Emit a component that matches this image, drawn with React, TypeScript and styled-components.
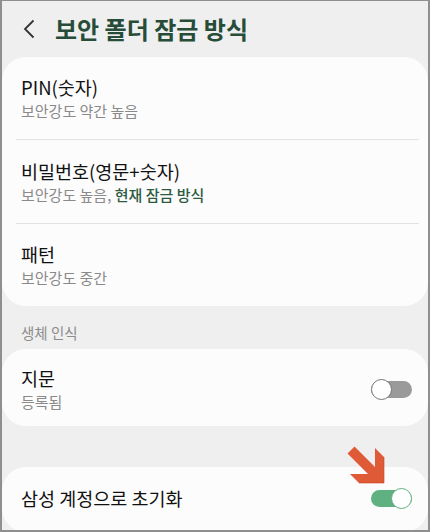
import styled, { createGlobalStyle } from 'styled-components';

const GlobalStyle = createGlobalStyle`
  html, body {
    margin: 0;
    padding: 0;
    background: #efefef;
  }
  body {
    font-family: "Noto Sans CJK KR", "Noto Sans", sans-serif;
    color: #111111;
  }
`;

const Frame = styled.div`
  position: relative;
  width: 430px;
  height: 532px;
  box-sizing: border-box;
  border: 2px solid #8f8f8f;
  border-top-width: 1px;
  background: #efefef;
  overflow: hidden;
`;

const Header = styled.header`
  height: 56px;
  display: flex;
  align-items: center;
  padding-left: 21px;
  gap: 20px;
`;

const Title = styled.h1`
  margin: 0;
  font-size: 24px;
  font-weight: 700;
  color: #274c38;
  line-height: 30px;
`;

const Card = styled.section<{ $gapTop?: number }>`
  background: #fcfcfc;
  border-radius: 24px;
  margin-top: ${(p) => p.$gapTop ?? 0}px;
`;

const Row = styled.div<{ $pad?: string }>`
  display: flex;
  align-items: center;
  justify-content: space-between;
  padding: ${(p) => p.$pad ?? '18px 16px 18px 19px'};
`;

const TextBlock = styled.div`
  display: flex;
  flex-direction: column;
`;

const ItemTitle = styled.div`
  font-size: 18.5px;
  line-height: 24px;
  color: #111111;
`;

const ItemSub = styled.div`
  font-size: 15px;
  line-height: 21px;
  color: #8a8a8a;
  margin-top: 1px;
`;

const Accent = styled.span`
  color: #2c5a42;
  font-weight: 500;
`;

const Divider = styled.hr`
  margin: 0 9px 0 14px;
  border: none;
  border-top: 1px solid #e2e2e2;
`;

const SectionLabel = styled.div`
  font-size: 14.5px;
  line-height: 20px;
  color: #8c8c8c;
  padding: 17px 19px 6px;
`;

const Switch = styled.span<{ $on?: boolean }>`
  display: inline-flex;
  align-items: center;
  justify-content: ${(p) => (p.$on ? 'flex-end' : 'flex-start')};
  width: 41px;
  height: 17px;
  border-radius: 9px;
  background: ${(p) => (p.$on ? '#5fb181' : '#9a9a9a')};
  flex-shrink: 0;
`;

const Knob = styled.span<{ $on?: boolean }>`
  width: 21px;
  height: 21px;
  box-sizing: border-box;
  border-radius: 50%;
  background: #ffffff;
  border: 1.5px solid ${(p) => (p.$on ? '#5fb181' : '#777777')};
`;

// annotation arrow drawn over the screenshot
const Arrow = styled.svg`
  position: absolute;
  left: 343px;
  top: 443px;
`;

const Toggle = ({ on }: { on?: boolean }) => (
  <Switch $on={on}>
    <Knob $on={on} />
  </Switch>
);

export default function App() {
  return (
    <>
      <GlobalStyle />
      <Frame>
        <Header>
          <svg width="12" height="20" viewBox="0 0 12 20">
            <path d="M10.5 1.5 L2 10 L10.5 18.5" fill="none" stroke="#333" strokeWidth="1.8" />
          </svg>
          <Title>보안 폴더 잠금 방식</Title>
        </Header>

        <Card>
          <Row>
            <TextBlock>
              <ItemTitle>PIN(숫자)</ItemTitle>
              <ItemSub>보안강도 약간 높음</ItemSub>
            </TextBlock>
          </Row>
          <Divider />
          <Row $pad="19px 16px 18px 19px">
            <TextBlock>
              <ItemTitle>비밀번호(영문+숫자)</ItemTitle>
              <ItemSub>
                보안강도 높음, <Accent>현재 잠금 방식</Accent>
              </ItemSub>
            </TextBlock>
          </Row>
          <Divider />
          <Row>
            <TextBlock>
              <ItemTitle>패턴</ItemTitle>
              <ItemSub>보안강도 중간</ItemSub>
            </TextBlock>
          </Row>
        </Card>

        <SectionLabel>생체 인식</SectionLabel>

        <Card>
          <Row $pad="17px 16px 14px 19px">
            <TextBlock>
              <ItemTitle>지문</ItemTitle>
              <ItemSub>등록됨</ItemSub>
            </TextBlock>
            <Toggle />
          </Row>
        </Card>

        <Card $gapTop={41}>
          <Row $pad="19px 16px 22px 19px">
            <ItemTitle>삼성 계정으로 초기화</ItemTitle>
            <Toggle on />
          </Row>
        </Card>

        <Arrow width="42" height="42" viewBox="0 0 42 42">
          <polygon
            points="9.5,2.5 30,23 30,4 39,13 39,39 14,39 5,30 23,30 2.5,9.5"
            fill="#df5a36"
          />
          <path d="M39 13 V39 H14" fill="none" stroke="#c4482a" strokeWidth="1" opacity="0.6" />
        </Arrow>
      </Frame>
    </>
  );
}
